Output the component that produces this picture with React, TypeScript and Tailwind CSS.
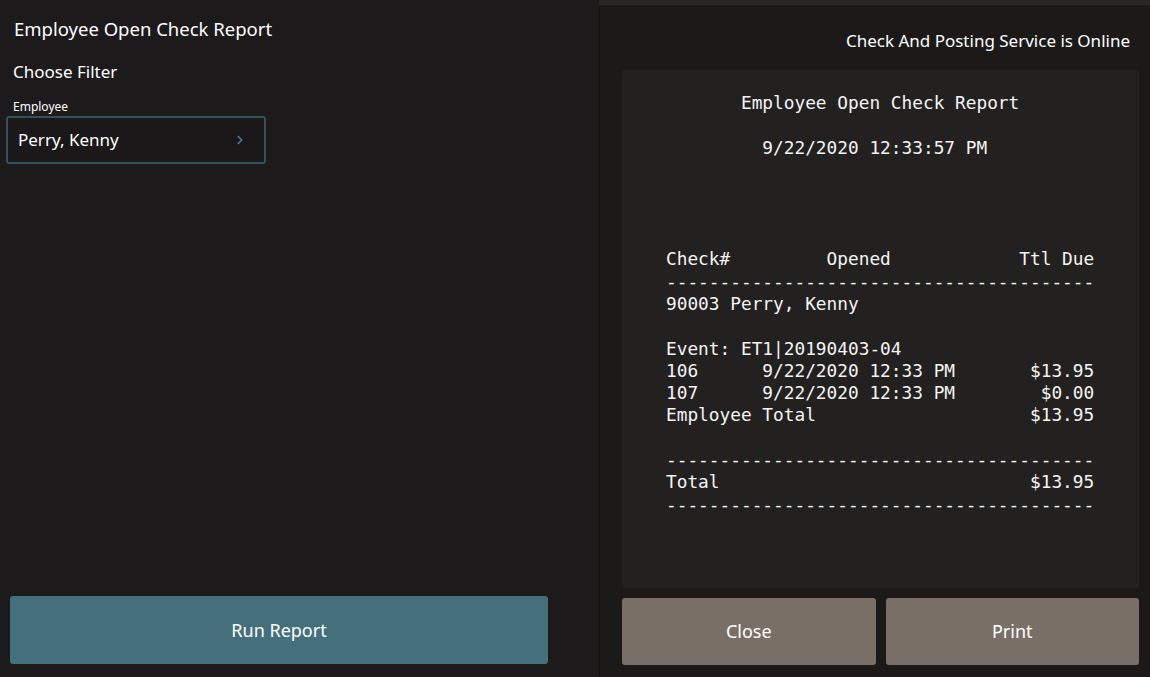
import { ChevronRight } from "lucide-react";

const sans = { fontFamily: '"Noto Sans", "Open Sans", sans-serif' };

// Report body, laid out as a 40-column printer receipt.
const reportLines = [
  "",
  "       Employee Open Check Report",
  "",
  "         9/22/2020 12:33:57 PM",
  "",
  "",
  "",
  "",
  "Check#         Opened            Ttl Due",
  "----------------------------------------",
  "90003 Perry, Kenny",
  "",
  "Event: ET1|20190403-04",
  "106      9/22/2020 12:33 PM       $13.95",
  "107      9/22/2020 12:33 PM        $0.00",
  "Employee Total                    $13.95",
  "",
  "----------------------------------------",
  "Total                             $13.95",
  "----------------------------------------",
];

function FilterPanel() {
  return (
    <div className="flex h-full w-[599px] flex-col bg-[#1c1a1b]" style={sans}>
      <h1 className="px-[14px] pt-[16px] text-[18.5px] leading-[26px] text-white">
        Employee Open Check Report
      </h1>
      <p className="mt-[19px] px-[13px] text-[17px] leading-[22px] text-white">
        Choose Filter
      </p>
      <p className="mt-[17px] px-[13px] text-[12px] leading-[14px] text-white">
        Employee
      </p>
      <button
        type="button"
        className="mx-[6px] mt-[2px] flex h-[48px] w-[260px] items-center justify-between rounded-[3px] border-2 border-[#32505a] bg-[#1a1819] pl-[10px] pr-[17px] text-left"
      >
        <span className="text-[17px] text-white">Perry, Kenny</span>
        <ChevronRight size={14} strokeWidth={3} className="text-[#4f7d89]" />
      </button>
      <div className="flex-1" />
      <div className="px-[10px] pb-[13px]">
        <button
          type="button"
          className="h-[68px] w-[538px] rounded-[3px] bg-[#44707c] text-[18px] text-white"
        >
          Run Report
        </button>
      </div>
    </div>
  );
}

function ReportPanel() {
  return (
    <div className="flex h-full flex-1 flex-col bg-[#2a2826] pt-[5px]">
      <div
        className="flex flex-1 flex-col border-l border-[#141312] bg-[#1b1a19] pl-[22px] pr-[8px]"
        style={sans}
      >
        <div className="flex h-[65px] items-center justify-end pr-[12px] pt-[6px]">
          <span className="text-[17px] text-white">
            Check And Posting Service is Online
          </span>
        </div>
        <div className="h-[518px] w-[517px] rounded-[3px] bg-[#23211f] pl-[44px]">
          <pre
            className="text-[17.8px] leading-[22.3px] text-[#f4f4f4]"
            style={{ fontFamily: '"DejaVu Sans Mono", "Liberation Mono", monospace' }}
          >
            {reportLines.join("\n")}
          </pre>
        </div>
        <div className="mt-[10px] flex w-[517px] gap-[10px]">
          <button
            type="button"
            className="h-[67px] flex-1 rounded-[3px] bg-[#7a6f67] text-[18px] text-white"
          >
            Close
          </button>
          <button
            type="button"
            className="h-[67px] flex-1 rounded-[3px] bg-[#7a6f67] text-[18px] text-white"
          >
            Print
          </button>
        </div>
      </div>
    </div>
  );
}

export default function App() {
  return (
    <div className="flex h-[677px] w-[1150px] overflow-hidden bg-[#1c1a1b]">
      <FilterPanel />
      <ReportPanel />
    </div>
  );
}
